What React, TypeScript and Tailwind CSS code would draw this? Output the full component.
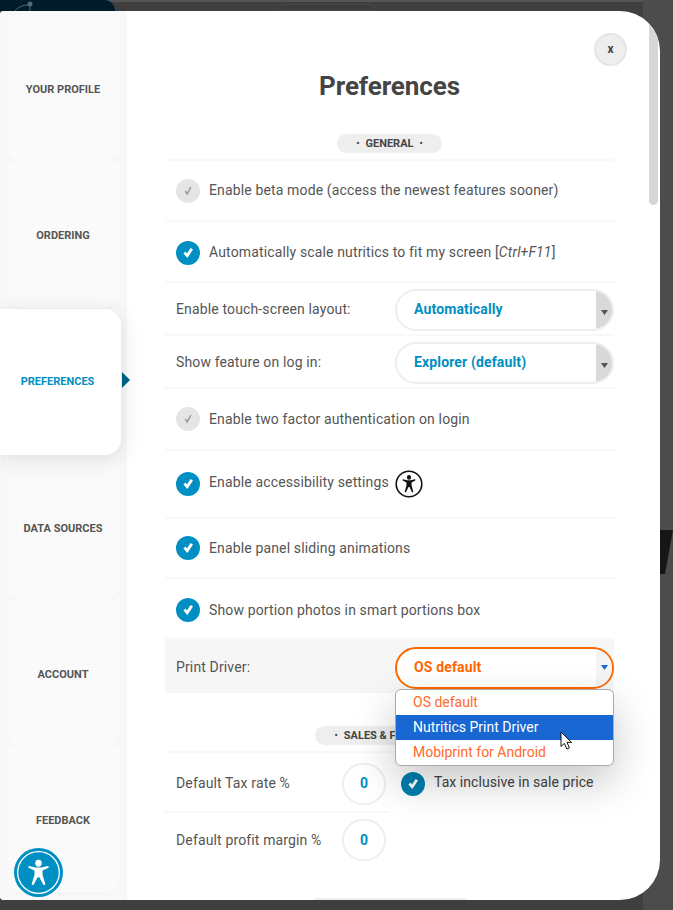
import React from "react";

const font = { fontFamily: "Roboto, sans-serif" };

function Check({ on = true, dim = false }: { on?: boolean; dim?: boolean }) {
  return (
    <span className={`flex h-6 w-6 shrink-0 items-center justify-center rounded-full ${on ? (dim ? "bg-[#007fae]" : "bg-[#008fc3]") : "bg-[#e5e5e5]"}`}>
      <svg width="12" height="12" viewBox="0 0 12 12">
        {on ? (
          <path d="M1.4 6.4 L3.6 4.6 L5 6.6 L8.6 1 L11 2.6 L5.4 11 Z" fill="#fff" />
        ) : (
          <path d="M2.4 6.6 L3.8 5.6 L5 7.2 L8.2 1.8 L9.6 2.6 L5.3 10.4 Z" fill="#a0a0a0" />
        )}
      </svg>
    </span>
  );
}

function Person({ color }: { color: string }) {
  return (
    <g fill={color}>
      <circle cx="12" cy="5.2" r="2.4" />
      <path d="M4.6 8.2 C4.3 8 4.4 7 5 7.1 L10 8.1 H14 L19 7.1 C19.6 7 19.7 8 19.4 8.2 L15 10.2 V13.2 L17 19.2 C17.2 20.2 15.9 20.5 15.4 19.7 L12.6 14.8 H11.4 L8.6 19.7 C8.1 20.5 6.8 20.2 7 19.2 L9 13.2 V10.2 Z" />
    </g>
  );
}

function Row({ h, children, className = "" }: { h: string; children: React.ReactNode; className?: string }) {
  return <div className={`flex items-center border-b-[2px] border-[#f8f8f8] pl-[11px] ${h} ${className}`}>{children}</div>;
}

function Select({ value }: { value: string }) {
  return (
    <div className="relative ml-auto flex h-[42px] w-[219px] items-center overflow-hidden rounded-full border-[2px] border-[#eeeeee] bg-white pl-[17px]">
      <span className="text-[14px] font-bold text-[#008fc3]">{value}</span>
      <span className="absolute right-0 top-0 flex h-full w-[16px] items-center justify-center bg-[#d9d9d9] pt-[5px]">
        <svg width="7" height="5" viewBox="0 0 7 5"><path d="M0 0H7L3.5 5Z" fill="#555" /></svg>
      </span>
    </div>
  );
}

function Pill({ label, className = "" }: { label: string; className?: string }) {
  return (
    <div className={`flex h-[19px] items-center justify-center gap-[6px] rounded-full bg-[#eeeeee] pt-[1px] text-[11px] font-bold uppercase tracking-normal text-[#444] ${className}`}>
      <span className="text-[9px]">•</span>
      <span>{label}</span>
      <span className="text-[9px]">•</span>
    </div>
  );
}

function NavItem({ label }: { label: string }) {
  return (
    <div className="ml-[6px] flex h-[146px] w-[114px] items-center justify-center rounded-b-2xl bg-[#fafafa] pt-[2px] shadow-[0_1px_1px_#f3f3f3]">
      <span className="text-[11px] font-bold uppercase text-[#555]">{label}</span>
    </div>
  );
}

export default function App() {
  return (
    <div style={font} className="relative h-[910px] w-[673px] overflow-hidden bg-[#3f3f3f] pt-[11px] text-[14px] text-[#555]">
      {/* backdrop page */}
      <div className="absolute left-0 top-0 h-[2px] w-full bg-[#555]" />
      <div className="absolute left-0 top-0 h-[11px] w-[115px] rounded-tr-2xl bg-[#011b2b]">
        <svg width="60" height="11" viewBox="0 0 60 11" className="absolute left-0 top-0">
          <circle cx="30" cy="4" r="2.5" fill="#596a75" />
          <path d="M15 11 C18 7 23 5 28 5 M30 5 V11" stroke="#596a75" fill="none" />
        </svg>
      </div>
      <div className="absolute right-0 top-0 h-full w-[30px] bg-[#4c4c4c]" />
      <div className="absolute left-[277px] top-[4px] h-[7px] w-[100px] rounded-t-2xl border border-[#484848] bg-[#3d3d3d]" />
      <svg width="13" height="44" viewBox="0 0 13 44" className="absolute left-[660px] top-[530px]">
        <path d="M0 0H13L5 44H0Z" fill="#161616" />
      </svg>

      {/* modal */}
      <div className="relative flex h-[889px] w-[660px] overflow-hidden rounded-l-[4px] rounded-r-[40px] bg-white">
        <aside className="w-[127px] shrink-0 bg-[#f8f8f8] pt-[5px]">
          <NavItem label="Your Profile" />
          <NavItem label="Ordering" />
          <div className="relative mt-[1px] flex h-[146px] w-[121px] items-center justify-center rounded-r-2xl bg-white pr-[6px] shadow-[0_4px_22px_rgba(0,0,0,0.12)]">
            <span className="text-[11px] font-bold uppercase text-[#008fc3]">Preferences</span>
            <svg width="8" height="16" viewBox="0 0 8 16" className="absolute left-[122px] top-[63px]">
              <path d="M0 0L8 8L0 16Z" fill="#005f85" />
            </svg>
          </div>
          <NavItem label="Data Sources" />
          <NavItem label="Account" />
          <NavItem label="Feedback" />
        </aside>

        <main className="relative min-w-0 flex-1 pl-[38px] pr-[46px] pt-[56px] tracking-[0.14px]">
          <h1 className="text-center text-[26px] font-bold leading-[38px] tracking-[-0.1px] text-[#444]">Preferences</h1>
          <Pill label="General" className="mx-auto mt-[29px] w-[105px]" />
          <div className="mt-[6px] border-t-[2px] border-[#f8f8f8]">
            <Row h="h-[61px]"><Check on={false} /><span className="ml-[9px]">Enable beta mode (access the newest features sooner)</span></Row>
            <Row h="h-[61px]" className="pt-[2px]"><Check /><span className="ml-[9px]">Automatically scale nutritics to fit my screen [<i>Ctrl+F11</i>]</span></Row>
            <Row h="h-[53px]" className="pt-[2px]"><span>Enable touch-screen layout:</span><Select value="Automatically" /></Row>
            <Row h="h-[53px]" className="pt-[2px]"><span>Show feature on log in:</span><Select value="Explorer (default)" /></Row>
            <Row h="h-[62px]"><Check on={false} /><span className="ml-[9px]">Enable two factor authentication on login</span></Row>
            <Row h="h-[68px]">
              <Check /><span className="ml-[9px] pb-[3px]">Enable accessibility settings</span>
              <svg width="28" height="28" viewBox="0 0 28 28" className="ml-[6px]">
                <circle cx="14" cy="14" r="12.8" fill="#fff" stroke="#111" strokeWidth="1.6" />
                <g transform="translate(3.8 2.2) scale(0.85 1)"><Person color="#111" /></g>
              </svg>
            </Row>
            <Row h="h-[60px]"><Check /><span className="ml-[9px]">Enable panel sliding animations</span></Row>
            <Row h="h-[61px]" className="pt-[3px]"><Check /><span className="ml-[9px]">Show portion photos in smart portions box</span></Row>
            <div className="flex h-[53px] items-center bg-[#f6f6f6] pl-[11px] pt-[2px]">
              <span>Print Driver:</span>
              <div className="ml-auto flex h-[42px] w-[219px] items-center overflow-hidden rounded-full border-[2px] border-[#ff6600] bg-white pl-[17px]">
                <span className="text-[14px] font-bold text-[#ff6600]">OS default</span>
                <span className="ml-auto flex h-full w-[16px] items-center justify-center bg-[#f5f5f5]">
                  <svg width="7" height="5" viewBox="0 0 7 5"><path d="M0 0H7L3.5 5Z" fill="#1967d2" /></svg>
                </span>
              </div>
            </div>
          </div>

          <Pill label="Sales & Finance" className="mx-auto mt-[33px] w-[150px]" />
          <div className="mt-[6px] border-t-[2px] border-[#f8f8f8]">
            <div className="flex h-[60px] items-center">
              <div className="flex h-full w-[225px] shrink-0 items-center border-b-[2px] border-[#f8f8f8] pl-[11px] pt-[3px]">
                <span>Default Tax rate %</span>
                <span className="ml-auto mr-[4px] flex h-[42px] w-[44px] items-center justify-center rounded-full border-[2px] border-[#eeeeee] font-bold text-[#008fc3]">0</span>
              </div>
              <span className="ml-[11px] pt-[2px]"><Check dim /></span>
              <span className="ml-[9px] pb-[1px] tracking-[0.06px] text-[#444]">Tax inclusive in sale price</span>
            </div>
            <div className="flex h-[54px] w-[225px] items-center pl-[11px]">
              <span>Default profit margin %</span>
              <span className="ml-auto mr-[4px] flex h-[42px] w-[44px] items-center justify-center rounded-full border-[2px] border-[#eeeeee] font-bold text-[#008fc3]">0</span>
            </div>
          </div>
          <div className="mx-auto mt-[31px] h-[4px] w-[154px] rounded-t-full bg-[#eeeeee]" />

          {/* open select list */}
          <div className="absolute left-[268px] top-[678px] w-[219px] overflow-hidden rounded-[6px] border border-[#aaaaaa] bg-white text-[14px] tracking-normal text-[#ff6a2a] shadow-[0_16px_40px_rgba(0,0,0,0.22)]">
            <div className="flex h-[25px] items-center pl-[17px]">OS default</div>
            <div className="flex h-[25px] items-center bg-[#1967d2] pl-[17px] text-white">Nutritics Print Driver</div>
            <div className="flex h-[25px] items-center pl-[17px]">Mobiprint for Android</div>
          </div>
          <svg width="14" height="20" viewBox="0 0 14 20" className="absolute left-[433px] top-[720px]">
            <path d="M1 1V15.5L4.4 12.4L6.8 18L9.4 16.9L7 11.4H11.6Z" fill="#fff" stroke="#111" strokeWidth="1" strokeLinejoin="round" />
          </svg>
        </main>

        {/* scrollbar */}
        <div className="absolute right-[2px] top-0 h-[194px] w-[9px] rounded-b-full bg-[#d6d6d6]" />
        {/* close */}
        <button className="absolute left-[594px] top-[22px] flex h-[33px] w-[33px] items-center justify-center rounded-full border-[2px] border-[#e5e5e5] bg-[#eeeeee] pb-[2px] text-[12px] font-bold text-[#444]">x</button>
        {/* accessibility launcher */}
        <div className="absolute left-[14px] top-[837px] h-[49px] w-[49px]">
          <svg width="49" height="49" viewBox="0 0 49 49">
            <circle cx="24.5" cy="24.5" r="24.5" fill="#008fc3" />
            <circle cx="24.5" cy="24.5" r="20.8" fill="none" stroke="#fff" strokeWidth="1.3" />
            <g transform="translate(8.3 7.8) scale(1.35 1.45)"><Person color="#fff" /></g>
          </svg>
        </div>
      </div>
    </div>
  );
}
